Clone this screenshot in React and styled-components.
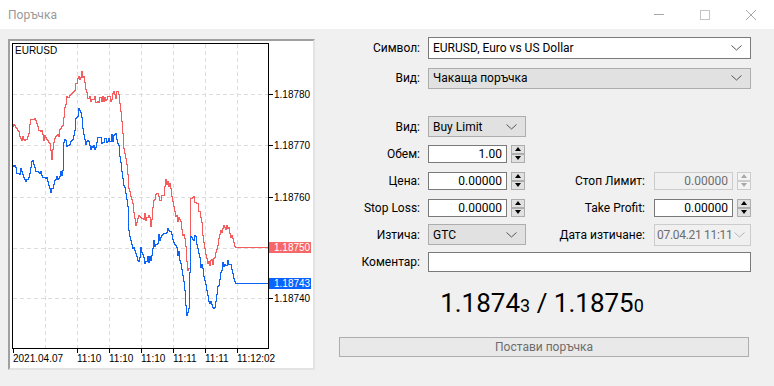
import React from "react";
import styled, { createGlobalStyle } from "styled-components";

const RED_POINTS = [
  [12, 126], [17, 128], [22, 140], [27, 135], [30, 120], [36, 120], [40, 133],
  [46, 140], [49, 142], [51, 158], [53, 140], [57, 135], [62, 128], [64, 110],
  [66, 95], [70, 92], [74, 88], [77, 80], [80, 74], [82, 76], [85, 88], [87, 100],
  [92, 99], [100, 98], [110, 97], [113, 94], [118, 94], [120, 112], [123, 150],
  [126, 165], [128, 185], [131, 195], [135, 222], [138, 212], [146, 216],
  [150, 222], [153, 200], [156, 196], [163, 196], [165, 182], [169, 182],
  [171, 196], [175, 213], [180, 222], [184, 240], [187, 268], [189, 267],
  [190, 200], [193, 198], [197, 200], [199, 215], [202, 232], [205, 252],
  [208, 265], [211, 262], [214, 255], [218, 240], [220, 232], [224, 228],
  [228, 228], [231, 237], [233, 245], [235, 247], [268, 247],
];

const BLUE_POINTS = [
  [12, 165], [15, 170], [20, 172], [25, 185], [28, 180], [32, 156], [35, 167],
  [40, 172], [42, 180], [46, 180], [50, 195], [53, 182], [58, 178], [62, 170],
  [63, 140], [67, 143], [72, 137], [75, 120], [78, 110], [80, 115], [82, 125],
  [85, 140], [92, 148], [97, 140], [105, 140], [112, 138], [115, 137],
  [118, 143], [121, 170], [124, 190], [127, 205], [128, 230], [133, 250],
  [137, 262], [140, 248], [143, 260], [150, 257], [153, 243], [157, 240],
  [163, 230], [168, 228], [173, 243], [178, 255], [180, 262], [183, 280],
  [186, 312], [188, 305], [190, 233], [195, 240], [200, 263], [205, 282],
  [208, 300], [213, 312], [217, 290], [220, 270], [223, 263], [230, 262],
  [233, 278], [235, 283], [268, 283],
];

const PRICES = [
  { y: 94, text: "1.18780" },
  { y: 145, text: "1.18770" },
  { y: 197, text: "1.18760" },
  { y: 298, text: "1.18740" },
];

const GRID_Y = [94, 145, 197, 248, 298];
const GRID_X = [45, 77, 109, 141, 173, 205, 237];
const TIMES = [
  { x: 13, text: "2021.04.07" },
  { x: 77, text: "11:10" },
  { x: 109, text: "11:10" },
  { x: 141, text: "11:10" },
  { x: 173, text: "11:11" },
  { x: 205, text: "11:11" },
  { x: 237, text: "11:12:02" },
];

// simple seeded generator so the tick noise is the same every render
const makeRandom = (seed) => {
  let s = seed;
  return () => {
    s = (s * 16807) % 2147483647;
    return s / 2147483647;
  };
};

const stepPath = (points, amp, seed) => {
  const rnd = makeRandom(seed);
  let noise = 0;
  let d = "";
  for (let i = 0; i < points.length - 1; i++) {
    const [x0, y0] = points[i];
    const [x1, y1] = points[i + 1];
    for (let x = x0; x < x1; x++) {
      const t = (x - x0) / (x1 - x0);
      if (rnd() > 0.35) noise = Math.round((rnd() - 0.5) * 2 * amp);
      const y = Math.round(y0 + (y1 - y0) * t + (x < 234 ? noise : 0));
      d += d === "" ? `M${x + 0.5} ${y + 0.5}` : `H${x + 0.5}V${y + 0.5}`;
    }
  }
  const last = points[points.length - 1];
  return d + `H${last[0]}`;
};

const Chart = () => (
  <ChartPanel>
    <svg width="303" height="327" viewBox="10 41 303 327" shapeRendering="crispEdges">
      {GRID_Y.map((y) => (
        <line key={y} x1="13" x2="268" y1={y + 0.5} y2={y + 0.5} stroke="#dcdcdc" strokeDasharray="4 3" />
      ))}
      {GRID_X.map((x) => (
        <line key={x} x1={x + 0.5} x2={x + 0.5} y1="44" y2="348" stroke="#dcdcdc" strokeDasharray="4 3" />
      ))}
      <path d={stepPath(RED_POINTS, 4, 7)} fill="none" stroke="#f45d5d" />
      <path d={stepPath(BLUE_POINTS, 4, 19)} fill="none" stroke="#0c63f5" />
      <rect x="12.5" y="43.5" width="256" height="305" fill="none" stroke="#000" />
      {PRICES.map((p) => (
        <g key={p.text}>
          <line x1="268" x2="273" y1={p.y + 0.5} y2={p.y + 0.5} stroke="#000" />
          <ChartText x="274" y={p.y + 4}>{p.text}</ChartText>
        </g>
      ))}
      <rect x="269" y="242" width="42" height="11" fill="#f66767" />
      <ChartText x="274" y="251" fill="#fff">1.18750</ChartText>
      <rect x="269" y="278" width="42" height="11" fill="#0a62ff" />
      <ChartText x="274" y="287" fill="#fff">1.18743</ChartText>
      {TIMES.map((t, i) => (
        <g key={i}>
          <line x1={t.x + 0.5} x2={t.x + 0.5} y1="349" y2="353" stroke="#000" />
          <ChartText x={t.x} y="362">{t.text}</ChartText>
        </g>
      ))}
      <ChartText x="15" y="54">EURUSD</ChartText>
    </svg>
  </ChartPanel>
);

const Chevron = ({ color }) => (
  <svg width="11" height="6" viewBox="0 0 11 6">
    <polyline points="0.5,0.5 5.5,5 10.5,0.5" fill="none" stroke={color} strokeWidth="1" />
  </svg>
);

const Select = ({ value, grey, disabled, width }) => (
  <SelectBox $grey={grey} $disabled={disabled} $width={width}>
    <SelectText $tight={disabled}>{value}</SelectText>
    <Chevron color={disabled ? "#b5b5b5" : "#555"} />
  </SelectBox>
);

const Spin = ({ disabled }) => (
  <SpinBox>
    <SpinHalf $disabled={disabled}>
      <Arrow $up $disabled={disabled} />
    </SpinHalf>
    <SpinHalf $disabled={disabled}>
      <Arrow $disabled={disabled} />
    </SpinHalf>
  </SpinBox>
);

const NumberField = ({ value, disabled }) => (
  <FieldGroup>
    <NumInput $disabled={disabled}>{value}</NumInput>
    <Spin disabled={disabled} />
  </FieldGroup>
);

const App = () => (
  <>
    <GlobalStyle />
    <Window>
      <TitleBar>
        <Title>Поръчка</Title>
        <Controls>
          <ControlButton>
            <svg width="10" height="1"><rect width="10" height="1" fill="#a8a8a8" /></svg>
          </ControlButton>
          <ControlButton>
            <svg width="10" height="10"><rect x="0.5" y="0.5" width="9" height="9" fill="none" stroke="#c4c4c4" /></svg>
          </ControlButton>
          <ControlButton>
            <svg width="10" height="10">
              <path d="M0 0L10 10M10 0L0 10" stroke="#a8a8a8" strokeWidth="1" />
            </svg>
          </ControlButton>
        </Controls>
      </TitleBar>
      <Body>
        <Chart />
        <Form>
          <TopRow>
            <Label>Символ:</Label>
            <Select value="EURUSD, Euro vs US Dollar" />
          </TopRow>
          <TopRow>
            <Label>Вид:</Label>
            <Select value="Чакаща поръчка" grey />
          </TopRow>
          <Spacer />
          <Row>
            <Label>Вид:</Label>
            <Select value="Buy Limit" grey width={98} />
          </Row>
          <Row>
            <Label>Обем:</Label>
            <NumberField value="1.00" />
          </Row>
          <Row>
            <Label>Цена:</Label>
            <NumberField value="0.00000" />
            <SideLabel>Стоп Лимит:</SideLabel>
            <NumberField value="0.00000" disabled />
          </Row>
          <Row>
            <Label>Stop Loss:</Label>
            <NumberField value="0.00000" />
            <SideLabel>Take Profit:</SideLabel>
            <NumberField value="0.00000" />
          </Row>
          <Row>
            <Label>Изтича:</Label>
            <Select value="GTC" grey width={98} />
            <SideLabel>Дата изтичане:</SideLabel>
            <Select value="07.04.21 11:11" disabled width={97} />
          </Row>
          <Row>
            <Label>Коментар:</Label>
            <TextInput />
          </Row>
          <PriceLine>
            1.1874<Small>3</Small> / 1.1875<Small>0</Small>
          </PriceLine>
          <PlaceButton>Постави поръчка</PlaceButton>
        </Form>
      </Body>
    </Window>
  </>
);

const GlobalStyle = createGlobalStyle`
  html, body {
    margin: 0;
    padding: 0;
    background: #f0f0f0;
  }
  body {
    font-family: Roboto, "Noto Sans", sans-serif;
    font-size: 12px;
    color: #000;
  }
`;

const Window = styled.div`
  width: 774px;
  height: 386px;
  display: flex;
  flex-direction: column;
  background: #f0f0f0;
  overflow: hidden;
`;

const TitleBar = styled.div`
  height: 29px;
  display: flex;
  align-items: center;
  background: #fff;
  padding-left: 8px;
`;

const Title = styled.div`
  color: #999;
  font-size: 12px;
`;

const Controls = styled.div`
  margin-left: auto;
  display: flex;
`;

const ControlButton = styled.div`
  width: 46px;
  height: 29px;
  display: flex;
  align-items: center;
  justify-content: center;
`;

const Body = styled.div`
  display: flex;
  align-items: flex-start;
  padding: 4px 0 0 8px;
`;

const ChartPanel = styled.div`
  width: 307px;
  height: 331px;
  margin-top: 6px;
  box-sizing: border-box;
  border: 2px solid;
  border-color: #a0a0a0 #e3e3e3 #e3e3e3 #a0a0a0;
  background: #fff;

  svg {
    display: block;
  }
`;

const ChartText = styled.text`
  font-family: "Liberation Sans", Arial, sans-serif;
  font-size: 10px;
`;

const Form = styled.div`
  width: 412px;
  margin-left: 24px;
  display: flex;
  flex-direction: column;
`;

const TopRow = styled.div`
  height: 30px;
  display: flex;
  align-items: center;
`;

const Row = styled.div`
  height: 27px;
  display: flex;
  align-items: center;
`;

const Spacer = styled.div`
  height: 20px;
`;

const Label = styled.div`
  width: 81px;
  margin-right: 8px;
  text-align: right;
  white-space: nowrap;
`;

const SideLabel = styled.div`
  flex: 1;
  margin-right: 9px;
  text-align: right;
  white-space: nowrap;
`;

const SelectBox = styled.div`
  box-sizing: border-box;
  height: ${(p) => (p.$grey ? 21 : 22)}px;
  ${(p) => (p.$width ? `width: ${p.$width}px;` : "flex: 1;")}
  display: flex;
  align-items: center;
  justify-content: space-between;
  gap: 3px;
  padding: 0 ${(p) => (p.$disabled ? 5 : 8)}px 0 ${(p) => (p.$disabled ? 2 : 4)}px;
  border: 1px solid ${(p) => (p.$disabled ? "#cccccc" : p.$grey ? "#adadad" : "#7a7a7a")};
  background: ${(p) => (p.$disabled ? "#f0f0f0" : p.$grey ? "#e1e1e1" : "#fff")};
  color: ${(p) => (p.$disabled ? "#6d6d6d" : "#000")};
  white-space: nowrap;

  svg {
    flex-shrink: 0;
  }
`;

const SelectText = styled.span`
  overflow: hidden;
  letter-spacing: ${(p) => (p.$tight ? "-0.3px" : "0")};
`;

const FieldGroup = styled.div`
  display: flex;
  align-items: center;
  gap: 4px;
`;

const NumInput = styled.div`
  box-sizing: border-box;
  width: 79px;
  height: 18px;
  padding-right: 4px;
  display: flex;
  align-items: center;
  justify-content: flex-end;
  border: 1px solid ${(p) => (p.$disabled ? "#cccccc" : "#7a7a7a")};
  background: ${(p) => (p.$disabled ? "#f0f0f0" : "#fff")};
  color: ${(p) => (p.$disabled ? "#6d6d6d" : "#000")};
`;

const SpinBox = styled.div`
  width: 14px;
  height: 18px;
  display: flex;
  flex-direction: column;
`;

const SpinHalf = styled.div`
  box-sizing: border-box;
  height: 9px;
  display: flex;
  align-items: center;
  justify-content: center;
  border: 1px solid ${(p) => (p.$disabled ? "#cccccc" : "#adadad")};
  background: ${(p) => (p.$disabled ? "#f4f4f4" : "#e1e1e1")};
`;

const Arrow = styled.div`
  width: 0;
  height: 0;
  border-left: 3.5px solid transparent;
  border-right: 3.5px solid transparent;
  ${(p) => (p.$up ? "border-bottom" : "border-top")}: 4px solid ${(p) => (p.$disabled ? "#a8a8a8" : "#000")};
`;

const TextInput = styled.div`
  flex: 1;
  box-sizing: border-box;
  height: 20px;
  border: 1px solid #7a7a7a;
  background: #fff;
`;

const PriceLine = styled.div`
  height: 56px;
  display: flex;
  align-items: center;
  justify-content: center;
  font-size: 26px;
  white-space: pre;
  padding-right: 6px;
`;

const Small = styled.span`
  font-size: 18px;
  align-self: center;
  padding-top: 4px;
`;

const PlaceButton = styled.div`
  box-sizing: border-box;
  width: 410px;
  height: 20px;
  margin-top: 6px;
  display: flex;
  align-items: center;
  justify-content: center;
  border: 1px solid #adadad;
  background: #e9e9e9;
  color: #6d6d6d;
`;

export default App;
